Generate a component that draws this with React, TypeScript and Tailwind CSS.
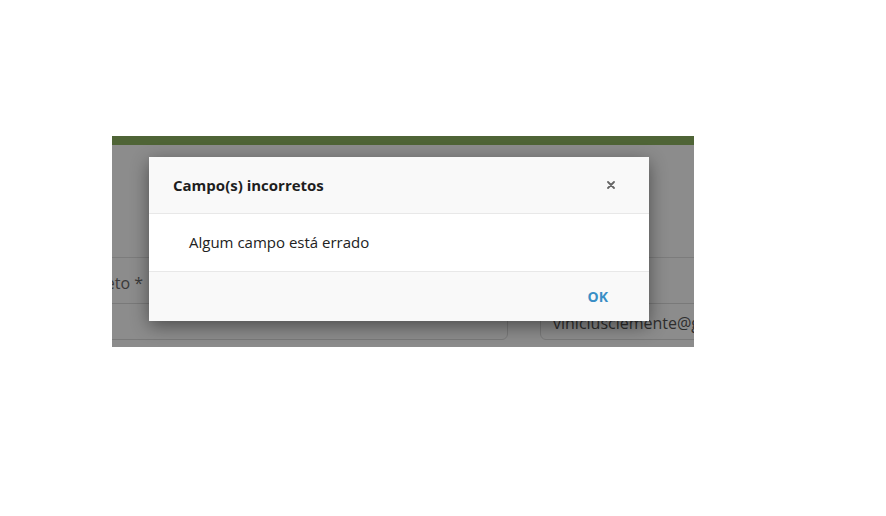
export default function App() {
  return (
    <div className="w-[886px] h-[516px] bg-white overflow-hidden pt-[136px] pl-[112px] font-['Open_Sans','Noto_Sans',sans-serif]">
      <div className="relative w-[582px] h-[211px] overflow-hidden bg-white">
        {/* top bar */}
        <div className="h-[9px] bg-[#4f6436]" />

        {/* form behind the overlay */}
        <div className="h-[112px]" />
        <div className="border-t border-[#e2e2e2] grid grid-cols-[396px_1fr] gap-x-[32px]">
          <div className="flex flex-col">
            <div className="h-[45px] pt-[4px] flex items-center justify-end w-[31px] whitespace-nowrap text-[16px] text-[#6a6a6a]">
              Nome completo *
            </div>
            <div className="h-[37px] -ml-2 border border-[#dcdcdc] rounded-md" />
          </div>
          <div className="flex flex-col">
            <div className="h-[45px]" />
            <div className="h-[37px] -mr-2 border border-[#dcdcdc] rounded-md flex items-center pl-3 pt-[3px] text-[16px] text-[#555] whitespace-nowrap">
              viniciusclemente@gmail.com
            </div>
          </div>
        </div>

        {/* overlay */}
        <div className="absolute left-0 right-0 top-[9px] bottom-0 bg-black/45" />

        {/* modal */}
        <div className="absolute left-[37px] top-[21px] w-[500px] bg-white rounded-[2px] shadow-[0_5px_18px_rgba(0,0,0,0.45)]">
          <div className="h-[57px] bg-[#f9f9f9] border-b border-[#e8e8e8] flex items-center justify-between pl-6 pr-[34px]">
            <span className="text-[15px] font-bold text-[#1e1e1e]">Campo(s) incorretos</span>
            <svg width="8" height="8" viewBox="0 0 8 8" className="text-[#666]">
              <path d="M1 1L7 7M7 1L1 7" stroke="currentColor" strokeWidth="1.8" strokeLinecap="round" />
            </svg>
          </div>
          <div className="h-[57px] flex items-center pl-10 text-[15px] text-[#222]">
            Algum campo está errado
          </div>
          <div className="h-[50px] bg-[#f9f9f9] border-t border-[#e8e8e8] flex items-center justify-end pr-[41px]">
            <span className="text-[14px] font-bold text-[#3a8fc6]">OK</span>
          </div>
        </div>
      </div>
    </div>
  );
}
